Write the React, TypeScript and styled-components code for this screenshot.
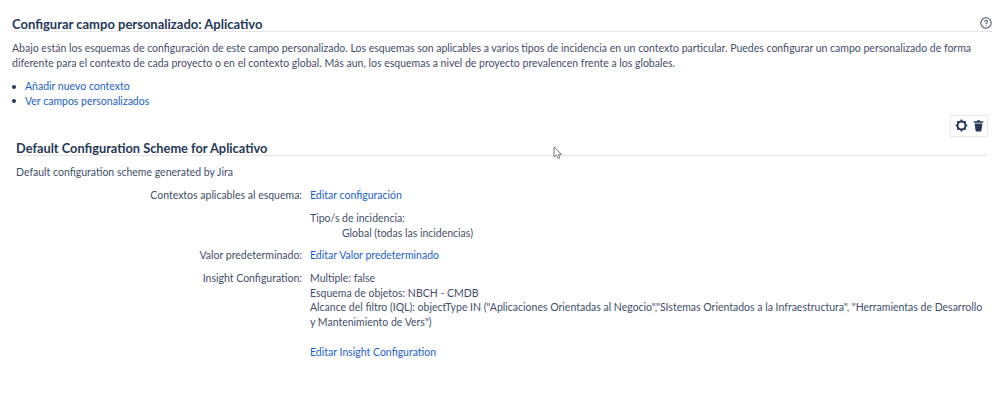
import React from 'react';
import styled, { createGlobalStyle } from 'styled-components';

const GlobalStyle = createGlobalStyle`
  html, body {
    margin: 0;
    padding: 0;
    background: #fff;
  }
  body {
    font-family: Lato, "Open Sans", sans-serif;
    font-size: 10.5px;
    line-height: 14.67px;
    color: #3f4f6b;
  }
`;

const Page = styled.main`
  position: relative;
  width: 999px;
  height: 404px;
  padding: 16px 7px 0 12px;
  box-sizing: border-box;
  overflow: hidden;
`;

const PageHeader = styled.header`
  display: flex;
  justify-content: space-between;
  align-items: flex-end;
  height: 15px;
  border-bottom: 1px solid #e4e6ea;
`;

const Title = styled.h1`
  align-self: flex-start;
  margin: 0;
  font-size: 13px;
  line-height: 17px;
  font-weight: 700;
  color: #253858;
`;

const HelpButton = styled.span`
  display: flex;
  width: 12px;
  height: 12px;
  margin-bottom: 2px;
  color: #42526e;
`;

const Intro = styled.p`
  margin: 9px 0 0;
  width: 975px;
`;

const Links = styled.ul`
  margin: 9px 0 0;
  padding: 0;
  list-style: none;
`;

const LinkItem = styled.li`
  display: flex;
  align-items: center;

  &::before {
    content: '';
    width: 4px;
    height: 4px;
    margin-right: 9px;
    border-radius: 50%;
    background: #253858;
  }
`;

const Anchor = styled.a`
  color: #1c5fc9;
  text-decoration: none;
`;

const Scheme = styled.section`
  margin: 6px 4px 0 4px;
`;

const Actions = styled.div`
  display: flex;
  justify-content: flex-end;
`;

const ActionBox = styled.div`
  display: flex;
  align-items: center;
  gap: 5px;
  width: 38px;
  height: 22px;
  padding-left: 4px;
  box-sizing: border-box;
  border: 1px solid #e6e8ec;
  color: #253858;
`;

const SchemeTitle = styled.h2`
  margin: 3px 0 0;
  height: 15px;
  font-size: 12.8px;
  line-height: 17px;
  font-weight: 700;
  color: #253858;
  border-bottom: 1px solid #e4e6ea;
`;

const Description = styled.p`
  margin: 9px 0 9px;
`;

const Row = styled.div`
  display: grid;
  grid-template-columns: 286px 1fr;
  column-gap: 8px;
  margin-top: 8px;
`;

const Label = styled.div`
  text-align: right;
`;

const Value = styled.div``;

const Indented = styled.div`
  padding-left: 32px;
`;

const EditLink = styled(Anchor)`
  display: block;
  margin-top: 15px;
`;

const Pointer = styled.svg`
  position: absolute;
  left: 553px;
  top: 146px;
`;

const App = () => {
  return (
    <Page>
      <GlobalStyle />
      <PageHeader>
        <Title>Configurar campo personalizado: Aplicativo</Title>
        <HelpButton>
          <svg width="12" height="12" viewBox="0 0 13 13" fill="none" stroke="currentColor">
            <circle cx="6.5" cy="6.5" r="5.6" strokeWidth="1.1" />
            <path d="M4.9 5.2c0-2 3.2-2 3.2-.1 0 1.3-1.6 1.2-1.6 2.5" strokeWidth="1.1" />
            <path d="M6.5 8.9v1" strokeWidth="1.1" />
          </svg>
        </HelpButton>
      </PageHeader>
      <Intro>
        Abajo están los esquemas de configuración de este campo personalizado. Los esquemas son aplicables a varios tipos de incidencia en un contexto particular. Puedes configurar un campo personalizado de forma diferente para el contexto de cada proyecto o en el contexto global. Más aun, los esquemas a nivel de proyecto prevalencen frente a los globales.
      </Intro>
      <Links>
        <LinkItem><Anchor href="#">Añadir nuevo contexto</Anchor></LinkItem>
        <LinkItem><Anchor href="#">Ver campos personalizados</Anchor></LinkItem>
      </Links>
      <Scheme>
        <Actions>
          <ActionBox>
            <svg width="13" height="13" viewBox="0 0 13 13" fill="none">
              <circle cx="6.5" cy="6.5" r="4" stroke="currentColor" strokeWidth="1.9" />
              <path d="M6.5.6v2M6.5 10.400v2M.6 6.5h2M10.400 6.5h2M2.300 2.300l1.400 1.400M9.300 9.300l1.400 1.400M10.700 2.300L9.300 3.700M3.700 9.300l-1.400 1.400" stroke="currentColor" strokeWidth="1.7" />
            </svg>
            <svg width="11" height="13" viewBox="0 0 11 13" fill="currentColor">
              <path d="M.8 2.2h3l.5-1h2.400l.5 1h3v1.600H.8zM1.600 4.600h7.800l-1 7.200a.9.9 0 0 1-.9.7H3.500a.9.9 0 0 1-.9-.7z" />
            </svg>
          </ActionBox>
        </Actions>
        <SchemeTitle>Default Configuration Scheme for Aplicativo</SchemeTitle>
        <Description>Default configuration scheme generated by Jira</Description>
        <Row>
          <Label>Contextos aplicables al esquema:</Label>
          <Value><Anchor href="#">Editar configuración</Anchor></Value>
        </Row>
        <Row>
          <Label />
          <Value>
            Tipo/s de incidencia:
            <Indented>Global (todas las incidencias)</Indented>
          </Value>
        </Row>
        <Row>
          <Label>Valor predeterminado:</Label>
          <Value><Anchor href="#">Editar Valor predeterminado</Anchor></Value>
        </Row>
        <Row>
          <Label>Insight Configuration:</Label>
          <Value>
            Multiple: false
            <br />
            Esquema de objetos: NBCH - CMDB
            <br />
            Alcance del filtro (IQL): objectType IN ("Aplicaciones Orientadas al Negocio","SIstemas Orientados a la Infraestructura", "Herramientas de Desarrollo y Mantenimiento de Vers")
            <EditLink href="#">Editar Insight Configuration</EditLink>
          </Value>
        </Row>
      </Scheme>
      <Pointer width="10" height="14" viewBox="0 0 10 14" fill="#fff" stroke="#555" strokeWidth="0.8">
        <path d="M1 1v10l2.500-2 1.600 3.600 1.800-.8L5.300 8.300H8.500z" />
      </Pointer>
    </Page>
  );
};

export default App;
